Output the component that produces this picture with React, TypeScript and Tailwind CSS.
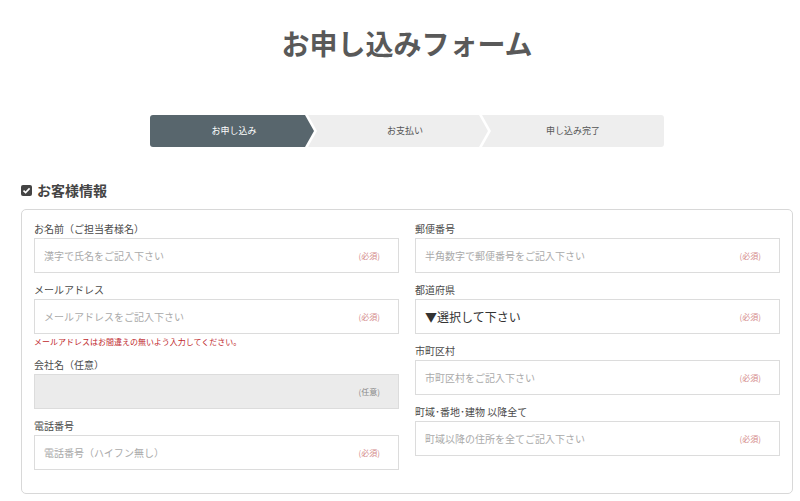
const font = { fontFamily: '"Noto Sans CJK JP", "Noto Sans", sans-serif' };

const Field = ({
  label,
  placeholder,
  tag = "(必須)",
  gray = false,
  select = false,
  note,
  last = false,
}: {
  label: string;
  placeholder: string;
  tag?: string;
  gray?: boolean;
  select?: boolean;
  note?: string;
  last?: boolean;
}) => (
  <div className={last ? "" : "mb-[10px]"}>
    <div className="text-[10px] leading-[14px] mb-[2px] text-[#4a4a4a]">{label}</div>
    <div
      className={`h-[35px] border border-[#dcdcdc] flex items-center justify-between pl-[9px] pr-[18px] ${
        gray ? "bg-[#ebebeb]" : "bg-white"
      }`}
    >
      <span className={select ? "text-[12px] text-[#333]" : "text-[10px] text-[#aaa]"}>
        {placeholder}
      </span>
      <span className={`text-[8px] ${gray ? "text-[#888]" : "text-[#d48a8a]"}`}>{tag}</span>
    </div>
    {note && (
      <div className="mt-[2px] text-[8px] leading-[12px] text-[#c0282d]">{note}</div>
    )}
  </div>
);

const CheckIcon = () => (
  <svg width="11" height="11" viewBox="0 0 11 11">
    <rect x="0" y="0" width="11" height="11" rx="2" fill="#444" />
    <path d="M2.5 5.6 L4.6 7.6 L8.6 3.4" stroke="#fff" strokeWidth="1.6" fill="none" />
  </svg>
);

export default function App() {
  return (
    <div className="w-[800px] h-[501px] bg-white overflow-hidden" style={font}>
      <div className="ml-[21px] w-[772px]">
        <h1 className="mt-[23px] text-center text-[28px] leading-[40px] font-bold text-[#595959]">
          お申し込みフォーム
        </h1>

        <div className="mt-[52px] mx-auto w-[514px] h-[32px] flex text-[9px]">
          <div className="w-[164px] shrink-0 bg-[#58666d] text-white rounded-l-[3px] flex items-center justify-center pl-[4px] [clip-path:polygon(0_0,calc(100%_-_9px)_0,100%_50%,calc(100%_-_9px)_100%,0_100%)]">
            お申し込み
          </div>
          <div className="w-[180px] shrink-0 -ml-[6px] bg-[#eeeeee] text-[#555] flex items-center justify-center pl-[14px] [clip-path:polygon(0_0,calc(100%_-_9px)_0,100%_50%,calc(100%_-_9px)_100%,0_100%,9px_50%)]">
            お支払い
          </div>
          <div className="w-[182px] shrink-0 -ml-[6px] bg-[#eeeeee] text-[#555] rounded-r-[3px] flex items-center justify-center [clip-path:polygon(0_0,100%_0,100%_100%,0_100%,9px_50%)]">
            申し込み完了
          </div>
        </div>

        <div className="mt-[33px] h-[20px] flex items-center gap-[5px]">
          <CheckIcon />
          <span className="text-[14px] font-bold text-[#444]">お客様情報</span>
        </div>

        <div className="mt-[9px] border border-[#d8d8d8] rounded-[5px] px-[12px] pt-[12px] pb-[23px] grid grid-cols-2 gap-x-[16px] items-start">
          <div>
            <Field label="お名前（ご担当者様名）" placeholder="漢字で氏名をご記入下さい" />
            <Field
              label="メールアドレス"
              placeholder="メールアドレスをご記入下さい"
              note="メールアドレスはお間違えの無いよう入力してください。"
            />
            <Field label="会社名（任意）" placeholder="" tag="(任意)" gray />
            <Field label="電話番号" placeholder="電話番号（ハイフン無し）" last />
          </div>
          <div>
            <Field label="郵便番号" placeholder="半角数字で郵便番号をご記入下さい" />
            <Field label="都道府県" placeholder="▼選択して下さい" select />
            <Field label="市町区村" placeholder="市町区村をご記入下さい" />
            <Field
              label="町域･番地･建物 以降全て"
              placeholder="町域以降の住所を全てご記入下さい"
              last
            />
          </div>
        </div>
      </div>
    </div>
  );
}
